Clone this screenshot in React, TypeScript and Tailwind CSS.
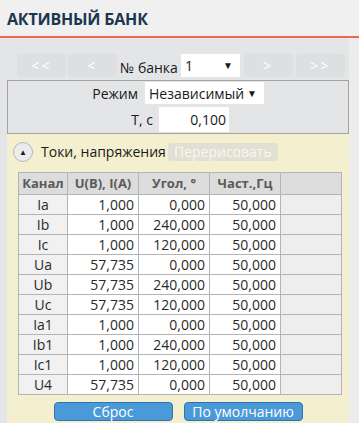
const rows = [
  { ch: 'Ia', u: '1,000', a: '0,000', f: '50,000' },
  { ch: 'Ib', u: '1,000', a: '240,000', f: '50,000' },
  { ch: 'Ic', u: '1,000', a: '120,000', f: '50,000' },
  { ch: 'Ua', u: '57,735', a: '0,000', f: '50,000' },
  { ch: 'Ub', u: '57,735', a: '240,000', f: '50,000' },
  { ch: 'Uc', u: '57,735', a: '120,000', f: '50,000' },
  { ch: 'Ia1', u: '1,000', a: '0,000', f: '50,000' },
  { ch: 'Ib1', u: '1,000', a: '240,000', f: '50,000' },
  { ch: 'Ic1', u: '1,000', a: '120,000', f: '50,000' },
  { ch: 'U4', u: '57,735', a: '0,000', f: '50,000' },
];

function NavButton({ label }: { label: string }) {
  return (
    <button className="flex h-[23px] w-[49px] items-center justify-center rounded-[3px] bg-[#dedfe0] text-[14px] tracking-[2px] text-white">
      {label}
    </button>
  );
}

function Select({ value, className }: { value: string; className: string }) {
  return (
    <div
      className={`flex items-center justify-between bg-white pr-[7px] pl-[4px] text-[14px] text-[#1a1a1a] ${className}`}
    >
      <span>{value}</span>
      <span className="text-[10px]">▼</span>
    </div>
  );
}

export default function App() {
  return (
    <div className="flex h-[423px] w-[359px] flex-col overflow-hidden bg-[#e4e5e6] font-['Open_Sans',sans-serif] text-[#1a1a1a]">
      <header className="h-[38px] shrink-0 border-b-2 border-[#ee6a4f] bg-[#f0f0f0] px-[7px] pt-[7px]">
        <h1 className="text-[16px] font-bold tracking-[-0.2px] text-[#1d3650]">
          АКТИВНЫЙ БАНК
        </h1>
      </header>

      <div className="flex flex-1">
        <div className="flex flex-1 flex-col pl-[7px]">
          <div className="mt-[15px] flex items-center pl-[10px]">
            <div className="flex gap-[2px]">
              <NavButton label="<<" />
              <NavButton label="<" />
            </div>
            <span className="mt-[4px] ml-[3px] text-[14px]">№ банка</span>
            <Select value="1" className="ml-[3px] h-[23px] w-[59px]" />
            <div className="ml-[4px] flex gap-[3px]">
              <NavButton label=">" />
              <NavButton label=">>" />
            </div>
          </div>

          <div className="mt-[2px] flex h-[54px] flex-col border border-[#a3a3a3]">
            <div className="mt-[1px] flex items-center">
              <span className="w-[130px] text-right text-[14px]">Режим</span>
              <Select value="Независимый" className="ml-[7px] h-[22px] w-[119px]" />
            </div>
            <div className="mt-[3px] flex items-center">
              <span className="w-[145px] text-right text-[14px]">Т, с</span>
              <div className="ml-[6px] flex h-[25px] w-[70px] items-center justify-end bg-white pr-[3px] text-[14px]">
                0,100
              </div>
            </div>
          </div>

          <div className="flex flex-1 flex-col bg-[#f3efcf]">
            <div className="mt-[7px] flex items-center">
              <div className="ml-[6px] flex h-[20px] w-[20px] items-center justify-center rounded-full border border-[#b5b5b5] bg-[#ececec] text-[8px] leading-none">
                ▲
              </div>
              <span className="ml-[8px] text-[14px]">Токи, напряжения</span>
              <button className="ml-[2px] h-[18px] w-[110px] rounded-[3px] bg-[#e2dfd3] text-[14px] leading-none text-[#f7f7f2]">
                Перерисовать
              </button>
            </div>

            <table className="mt-[10px] ml-[11px] w-[324px] table-fixed border-collapse border border-[#7f9dbd] text-[14px] text-[#2a2a2a]">
              <colgroup>
                <col className="w-[49px]" />
                <col className="w-[71px]" />
                <col className="w-[71px]" />
                <col className="w-[71px]" />
                <col />
              </colgroup>
              <thead>
                <tr className="h-[22px] bg-[#dcdcdc] text-[13px] font-bold text-[#5a5a5a]">
                  <th className="border border-[#b4b4b4]">Канал</th>
                  <th className="border border-[#b4b4b4]">U(B), I(A)</th>
                  <th className="border border-[#b4b4b4]">Угол, °</th>
                  <th className="border border-[#b4b4b4]">Част.,Гц</th>
                  <th className="border border-[#b4b4b4]"></th>
                </tr>
              </thead>
              <tbody>
                {rows.map((row) => (
                  <tr key={row.ch} className="h-[20px] leading-none">
                    <td className="border border-[#b4b4b4] bg-[#f1f1f1] text-center">
                      {row.ch}
                    </td>
                    <td className="border border-[#b4b4b4] bg-white pr-[4px] text-right">
                      {row.u}
                    </td>
                    <td className="border border-[#b4b4b4] bg-white pr-[4px] text-right">
                      {row.a}
                    </td>
                    <td className="border border-[#b4b4b4] bg-white pr-[4px] text-right">
                      {row.f}
                    </td>
                    <td className="border border-[#b4b4b4] bg-[#eeeeee]"></td>
                  </tr>
                ))}
              </tbody>
            </table>

            <div className="mt-[7px] flex justify-center gap-[11px]">
              <button className="h-[19px] w-[119px] rounded-[4px] border border-[#2f74b0] bg-[#4a9ad9] text-[14px] leading-none text-white">
                Сброс
              </button>
              <button className="h-[19px] w-[119px] rounded-[4px] border border-[#2f74b0] bg-[#4a9ad9] text-[14px] leading-none text-white">
                По умолчанию
              </button>
            </div>
          </div>
        </div>
        <div className="w-[10px] bg-[#ececec]"></div>
      </div>
    </div>
  );
}
